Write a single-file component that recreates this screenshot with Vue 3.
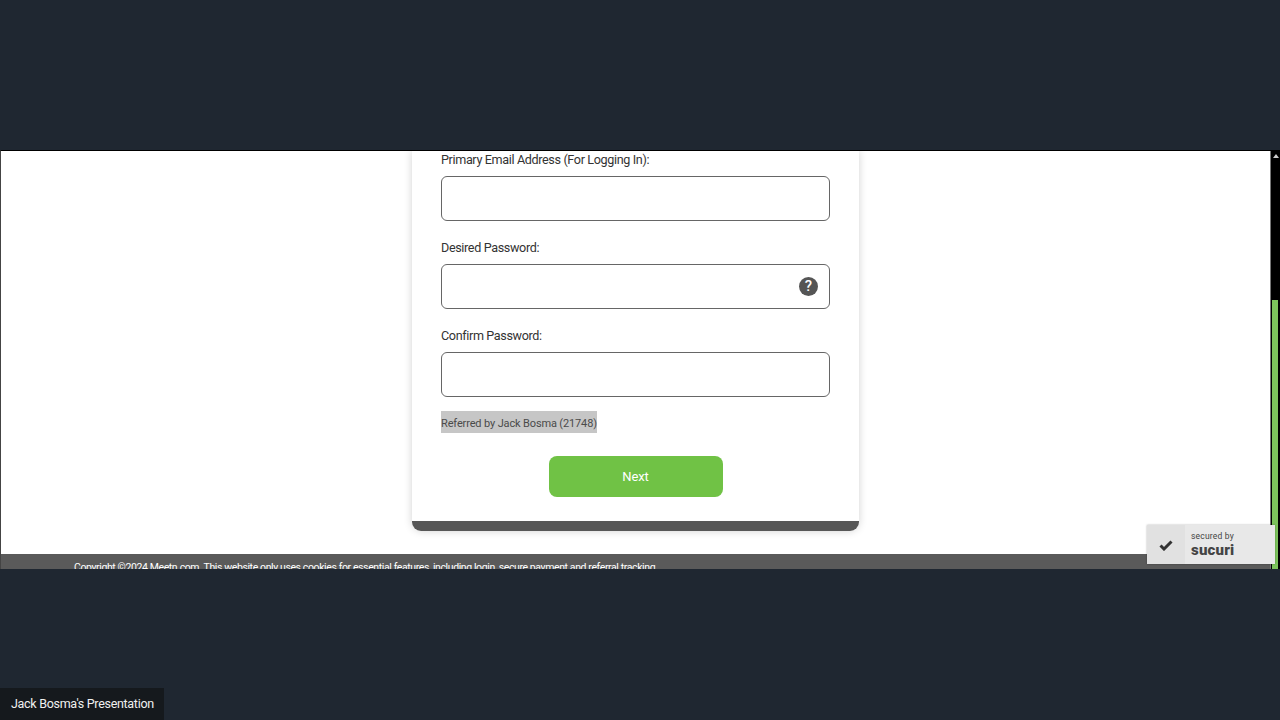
<template>
  <div class="stage">
    <div class="screen">
      <div class="page">
        <div class="card">
          <div class="card-body">
            <div class="field" v-for="f in fields" :key="f.label">
              <label>{{ f.label }}</label>
              <div class="input">
                <span v-if="f.help" class="help">?</span>
              </div>
            </div>
            <div class="referred"><span>Referred by Jack Bosma (21748)</span></div>
            <button class="next">Next</button>
          </div>
          <div class="card-foot"></div>
        </div>
        <div class="footer">
          Copyright ©2024 Meetn.com. This website only uses cookies for essential features, including login, secure payment and referral tracking.
        </div>
      </div>
      <div class="scrollbar">
        <div class="arrow"></div>
        <div class="thumb"></div>
      </div>
      <div class="sucuri">
        <div class="check">
          <svg width="14" height="12" viewBox="0 0 14 12"><path d="M1.5 6.5 L5 10 L12.5 2.5" fill="none" stroke="#333" stroke-width="3"/></svg>
        </div>
        <div class="brand">
          <span class="secured">secured by</span>
          <span class="logo">sucuri</span>
        </div>
      </div>
    </div>
    <div class="presenter">Jack Bosma's Presentation</div>
  </div>
</template>

<script setup>
const fields = [
  { label: 'Primary Email Address (For Logging In):' },
  { label: 'Desired Password:', help: true },
  { label: 'Confirm Password:' },
]
</script>

<style>
body {
  background: #1f2731;
}
</style>

<style scoped>
.stage {
  width: 1280px;
  height: 720px;
  overflow: hidden;
  background: #1f2731;
  display: flex;
  flex-direction: column;
  justify-content: space-between;
  padding-top: 150px;
  box-sizing: border-box;
  font-family: Roboto, "Noto Sans", sans-serif;
}
.screen {
  position: relative;
  height: 419px;
  display: flex;
  background: #fff;
  border-top: 1px solid #000;
  border-left: 1px solid #444;
  box-sizing: border-box;
}
.page {
  flex: 1;
  height: 418px;
  overflow: hidden;
  display: flex;
  flex-direction: column;
  align-items: center;
}
.card {
  width: 447px;
  height: 380px;
  border-radius: 0 0 10px 10px;
  box-shadow: 0 0 8px rgba(0, 0, 0, 0.18);
  display: flex;
  flex-direction: column;
  flex: none;
}
.card-body {
  flex: 1;
  padding: 1px 29px 0;
  display: flex;
  flex-direction: column;
  background: #fff;
}
.field {
  margin-bottom: 19px;
}
.field label {
  display: block;
  height: 16px;
  line-height: 16px;
  font-size: 12.6px;
  letter-spacing: -0.36px;
  color: #333;
  margin: 0 0 8px;
}
.input {
  height: 45px;
  box-sizing: border-box;
  border: 1px solid #666;
  border-radius: 6px;
  display: flex;
  align-items: center;
  justify-content: flex-end;
  padding-right: 11px;
}
.help {
  width: 19px;
  height: 19px;
  border-radius: 50%;
  background: #555;
  color: #fff;
  font-size: 15px;
  font-weight: 500;
  line-height: 19px;
  text-align: center;
}
.referred {
  margin-top: -5px;
}
.referred span {
  display: inline-block;
  height: 22px;
  line-height: 26px;
  white-space: nowrap;
  background: #c6c6c6;
  color: #4a4a4a;
  font-size: 11px;
  letter-spacing: -0.14px;
}
.next {
  align-self: center;
  width: 174px;
  height: 41px;
  margin-top: 23px;
  border: 0;
  border-radius: 8px;
  background: #70c245;
  color: #fff;
  font-family: inherit;
  font-size: 13px;
  letter-spacing: -0.1px;
}
.card-foot {
  height: 10px;
  background: #575757;
  border-radius: 0 0 9px 9px;
}
.footer {
  align-self: stretch;
  flex: none;
  height: 16px;
  margin-top: 23px;
  background: #5a5a5a;
  color: #fff;
  font-size: 10.5px;
  letter-spacing: -0.39px;
  line-height: 27px;
  padding-left: 73px;
  white-space: nowrap;
  overflow: hidden;
}
.scrollbar {
  width: 10px;
  height: 418px;
  box-sizing: border-box;
  background: #000;
  border-left: 1px solid #777;
  flex: none;
  display: flex;
  flex-direction: column;
  justify-content: space-between;
}
.arrow {
  margin: 3px 0 0 2px;
  width: 0;
  border-left: 3px solid transparent;
  border-right: 3px solid transparent;
  border-bottom: 4px solid #ccc;
}
.thumb {
  width: 6px;
  height: 269px;
  margin-left: 1px;
  background: #7cc35c;
}
.sucuri {
  position: absolute;
  right: 5px;
  top: 374px;
  width: 128px;
  height: 39px;
  background: #e8e8e8;
  box-shadow: 0 0 2px rgba(0, 0, 0, 0.3);
  display: flex;
}
.check {
  width: 38px;
  background: #e1e1e1;
  display: flex;
  align-items: center;
  justify-content: center;
}
.brand {
  padding: 5px 0 0 6px;
  display: flex;
  flex-direction: column;
  color: #444;
}
.secured {
  font-size: 8.5px;
  letter-spacing: 0.2px;
  line-height: 12px;
}
.logo {
  font-size: 15px;
  line-height: 17px;
  font-weight: 900;
  letter-spacing: 0.2px;
}
.presenter {
  align-self: flex-start;
  width: 164px;
  height: 32px;
  background: #15191d;
  color: #f0f0f0;
  font-size: 12.5px;
  letter-spacing: -0.3px;
  line-height: 31px;
  padding-left: 11px;
  box-sizing: border-box;
  white-space: nowrap;
}
</style>
